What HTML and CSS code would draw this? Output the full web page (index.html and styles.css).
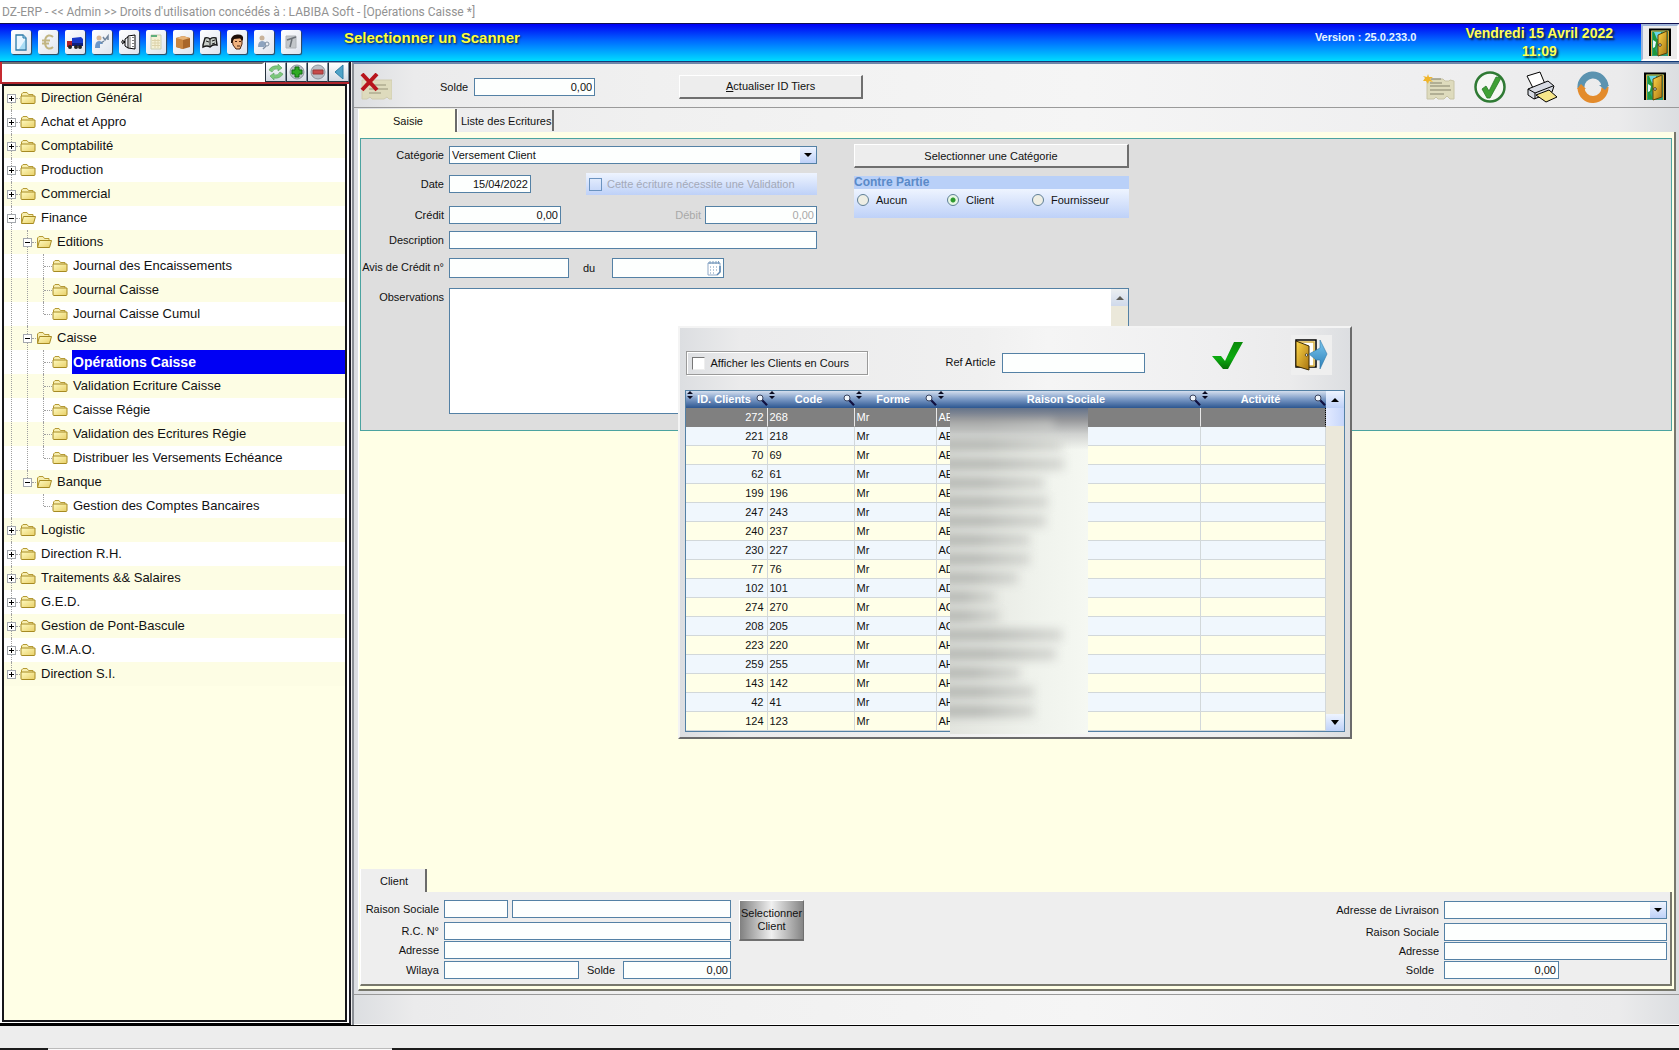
FILE: index.html
```html
<!DOCTYPE html>
<html lang="fr">
<head>
<meta charset="utf-8">
<title>DZ-ERP - Opérations Caisse</title>
<meta name="viewport" content="width=device-width, initial-scale=1">
<link rel="stylesheet" href="styles.css">
</head>
<body>
<svg class="sprite" aria-hidden="true">
  <defs>
    <linearGradient id="gold" x1="0" y1="0" x2="1" y2="1"><stop offset="0" stop-color="#fffbc0"/><stop offset="1" stop-color="#e8cf68"/></linearGradient>
    <linearGradient id="doorwood" x1="0" y1="0" x2="1" y2="1"><stop offset="0" stop-color="#ffd84a"/><stop offset="1" stop-color="#a87410"/></linearGradient>
    <linearGradient id="arrowblue" x1="0" y1="0" x2="0" y2="1"><stop offset="0" stop-color="#7cc8f0"/><stop offset="1" stop-color="#2c7fb8"/></linearGradient>
    <linearGradient id="leaf" x1="0" y1="0" x2="0" y2="1"><stop offset="0" stop-color="#0a8a0a"/><stop offset=".6" stop-color="#0cab10"/><stop offset="1" stop-color="#067006"/></linearGradient>
    <symbol id="folder" viewBox="0 0 16 14"><path d="M1.500 12V3L3 1.500h4l1.500 2h4.500v1.500" fill="#f7eeb0" stroke="#b59a35"/><path d="M3 5h12v6.500q0 1-1 1H2q-1 0-1-1V5z" fill="url(#gold)" stroke="#a68a22"/></symbol>
    <symbol id="folder-open" viewBox="0 0 16 14"><path d="M1.500 12V3L3 1.500h4l1.500 2h4.500v2" fill="#f7eeb0" stroke="#b59a35"/><path d="M3.500 5.500h12L13.500 12.500H1.500z" fill="url(#gold)" stroke="#a68a22"/></symbol>
    <symbol id="door" viewBox="0 0 22 29"><path d="M1 28V1.500h20V28" fill="#2f9e78" stroke="#000" stroke-width="2"/><path d="M2.500 28V3h17v25" fill="none" stroke="#d8b040"/><path d="M4 4h6v5l-2 3 1 5-3 4 3 6H4z" fill="#1f9a3c"/><path d="M5 4h7v7h-4z" fill="#66d8e8"/><path d="M4 12l3 2-1 5-2 1z" fill="#e9fbff"/><path d="M9 7l9-4v22l-9 3z" fill="url(#doorwood)" stroke="#5e4208"/><circle cx="11" cy="17" r="1.300" fill="#fff" stroke="#000" stroke-width=".7"/></symbol>
    <symbol id="lens" viewBox="0 0 12 12"><path d="M6 6l5 5.200" stroke="#101040" stroke-width="2.200"/><circle cx="4" cy="4" r="3" fill="#eef3fa" stroke="#39435e"/></symbol>
    <symbol id="sort" viewBox="0 0 6 8"><path d="M3 0l3 3H0zM0 5h6L3 8z" fill="#0a0a20"/></symbol>
  </defs>
</svg>

<div class="app">
  <div class="titlebar">DZ-ERP - &lt;&lt; Admin &gt;&gt; Droits d'utilisation concédés à : LABIBA Soft - [Opérations Caisse *]</div>

  <header class="banner">
    <nav class="quick" aria-label="Raccourcis">
      <button class="quick-btn" type="button" aria-label="Nouveau"><svg viewBox="0 0 16 20"><path d="M3 3h7l3 3v12H3z" fill="#eaf6ff" stroke="#2c7aa8" stroke-width="1.300"/><path d="M10 3v3h3" fill="#9fd0ea" stroke="#2c7aa8"/><path d="M12 8v9H6z" fill="#a9dcf5"/></svg></button>
      <button class="quick-btn" type="button" aria-label="Devises"><svg viewBox="0 0 16 20"><path d="M13 5Q11 3 8.500 3.500 5 4.500 5 10t3.500 6.500Q11 17 13 15M2 8.500h8M2 11.500h7" fill="none" stroke="#c2b583" stroke-width="2"/></svg></button>
      <button class="quick-btn" type="button" aria-label="Livraison"><svg viewBox="0 0 16 20"><path d="M0 9h5v6H0z" fill="#b0202a"/><path d="M5 6l9-1 2 2v7H5z" fill="#1838c8"/><path d="M5 11h11v3H5z" fill="#0d1f80"/><circle cx="3" cy="15" r="2" fill="#222"/><circle cx="9" cy="15" r="2" fill="#222"/><circle cx="13" cy="15" r="2" fill="#222"/></svg></button>
      <button class="quick-btn" type="button" aria-label="Contacts"><svg viewBox="0 0 16 20"><circle cx="5" cy="6" r="2.500" fill="#d7b898"/><path d="M1 16q0-7 4-7 3 0 4 3H6v4z" fill="#6d97c9"/><path d="M9 5l2 3 3-4v4M7 11l3-2" fill="none" stroke="#70849c" stroke-width="1.500"/></svg></button>
      <button class="quick-btn" type="button" aria-label="Classeur"><svg viewBox="0 0 16 20"><path d="M7 4l7-1v14l-7-1z" fill="#fff" stroke="#000"/><path d="M12 5v1M12 8v1M12 11v1M12 14v1M7 5L4 7v7l3 2M0 10h4M1 8l3 2-3 2" fill="none" stroke="#000"/><path d="M9 5v11" stroke="#777"/></svg></button>
      <button class="quick-btn" type="button" aria-label="Facture"><svg viewBox="0 0 16 20"><path d="M3 3h10v14H3z" fill="#f5f1d6" stroke="#c9cdb0"/><path d="M3 3h6v2H3z" fill="#5fae7c"/><path d="M4 8.500h8M4 11h8M4 13.500h8M7 7v9M10 7v9" stroke="#ddd3aa"/></svg></button>
      <button class="quick-btn" type="button" aria-label="Stock"><svg viewBox="0 0 16 20"><path d="M1 6l7-2 7 2v9l-7 2-7-2z" fill="#a9662a"/><path d="M1 6l7 2v9l-7-2z" fill="#c98540"/><path d="M1 6l7-2 7 2-7 2z" fill="#e8b478"/></svg></button>
      <button class="quick-btn" type="button" aria-label="Journal"><svg viewBox="0 0 16 20"><path d="M1 13L3 6q3-1 5 1 3-2 6-1l1 7q-4-1-7 2-3-2-7 0z" fill="#c6ccc6" stroke="#181818" stroke-width="1.400"/><path d="M8 7v8M4 9l3 1M10 9l3-1M10 12l3-1" stroke="#222"/></svg></button>
      <button class="quick-btn" type="button" aria-label="Employé"><svg viewBox="0 0 16 20"><path d="M3 6h10v6l-2 5H7l-3-4z" fill="#f0b27e" stroke="#4a2410"/><path d="M2 11Q1 3 8 2.500t6 5L13 9l-2-3-6 1-2 4z" fill="#1d0f08"/><path d="M6 9.500h2M10 9.500h2M8 14h3" stroke="#4a2410"/></svg></button>
      <button class="quick-btn" type="button" aria-label="Utilisateurs"><svg viewBox="0 0 16 20"><circle cx="6" cy="6" r="2.500" fill="#c9b39a"/><path d="M2 15q0-6 4-6 3 0 4 3l-2 3z" fill="#8da3bf"/><circle cx="11" cy="12" r="2" fill="none" stroke="#8090a4"/><path d="M10 14l-3 3" stroke="#8090a4" stroke-width="1.500"/></svg></button>
      <button class="quick-btn" type="button" aria-label="Calcul"><svg viewBox="0 0 16 20"><path d="M3 4h10v12H3z" fill="#c2c6ca" stroke="#b0b4b8"/><path d="M4 8l9-3M9 7l-2 8" stroke="#6c7278" stroke-width="1.500"/></svg></button>
    </nav>
    <div class="banner-title">Selectionner un Scanner</div>
    <div class="version">Version : 25.0.233.0</div>
    <div class="clock">Vendredi 15 Avril 2022<br>11:09</div>
    <button class="exit-btn" type="button" aria-label="Quitter"><svg><use href="#door"/></svg></button>
  </header>

  <div class="content">
    <aside class="sidebar">
      <div class="search">
        <input class="search-box" type="text" aria-label="Rechercher">
        <button class="search-btn" type="button" aria-label="Actualiser"><svg viewBox="0 0 16 16"><path d="M1 6q3-5 9-4v-2l4 4-4 3V5Q6 4 4 8zM15 10q-3 5-9 4v2l-4-4 4-3v2q4 1 6-3z" fill="#7cc87a" stroke="#5ba05e" stroke-width=".6"/></svg></button>
        <button class="search-btn" type="button" aria-label="Développer"><svg viewBox="0 0 16 16"><circle cx="8" cy="8" r="7" fill="#b9bec6" stroke="#8f969f"/><path d="M6 3h4v3h3v4h-3v3H6v-3H3V6h3z" fill="#2faa22" stroke="#0f6e10"/></svg></button>
        <button class="search-btn" type="button" aria-label="Réduire"><svg viewBox="0 0 16 16"><circle cx="8" cy="8" r="7" fill="#b9bec6" stroke="#8f969f"/><path d="M3 6h10v4H3z" fill="#c84a4a" stroke="#9c3838"/></svg></button>
        <button class="search-btn" type="button" aria-label="Masquer"><svg viewBox="0 0 16 16"><path d="M12 1v14L4 8z" fill="#4fa3c8" stroke="#2f7fa6"/></svg></button>
      </div>
      <nav class="tree-box" aria-label="Modules">
        <ul class="tree">
          <li><div class="node"><button class="toggle plus" type="button" aria-label="Développer"></button><svg class="fold"><use href="#folder"/></svg><a href="#">Direction Général</a></div></li>
          <li><div class="node"><button class="toggle plus" type="button" aria-label="Développer"></button><svg class="fold"><use href="#folder"/></svg><a href="#">Achat et Appro</a></div></li>
          <li><div class="node"><button class="toggle plus" type="button" aria-label="Développer"></button><svg class="fold"><use href="#folder"/></svg><a href="#">Comptabilité</a></div></li>
          <li><div class="node"><button class="toggle plus" type="button" aria-label="Développer"></button><svg class="fold"><use href="#folder"/></svg><a href="#">Production</a></div></li>
          <li><div class="node"><button class="toggle plus" type="button" aria-label="Développer"></button><svg class="fold"><use href="#folder"/></svg><a href="#">Commercial</a></div></li>
          <li><div class="node"><button class="toggle" type="button" aria-label="Réduire"></button><svg class="fold"><use href="#folder-open"/></svg><a href="#">Finance</a></div>
            <ul>
              <li><div class="node"><button class="toggle" type="button" aria-label="Réduire"></button><svg class="fold"><use href="#folder-open"/></svg><a href="#">Editions</a></div>
                <ul>
                  <li><div class="node leaf"><svg class="fold"><use href="#folder"/></svg><a href="#">Journal des Encaissements</a></div></li>
                  <li><div class="node leaf"><svg class="fold"><use href="#folder"/></svg><a href="#">Journal Caisse</a></div></li>
                  <li><div class="node leaf"><svg class="fold"><use href="#folder"/></svg><a href="#">Journal Caisse Cumul</a></div></li>
                </ul>
              </li>
              <li><div class="node"><button class="toggle" type="button" aria-label="Réduire"></button><svg class="fold"><use href="#folder-open"/></svg><a href="#">Caisse</a></div>
                <ul>
                  <li><div class="node leaf"><svg class="fold"><use href="#folder"/></svg><a class="current" href="#">Opérations Caisse</a></div></li>
                  <li><div class="node leaf"><svg class="fold"><use href="#folder"/></svg><a href="#">Validation Ecriture Caisse</a></div></li>
                  <li><div class="node leaf"><svg class="fold"><use href="#folder"/></svg><a href="#">Caisse Régie</a></div></li>
                  <li><div class="node leaf"><svg class="fold"><use href="#folder"/></svg><a href="#">Validation des Ecritures Régie</a></div></li>
                  <li><div class="node leaf"><svg class="fold"><use href="#folder"/></svg><a href="#">Distribuer les Versements Echéance</a></div></li>
                </ul>
              </li>
              <li><div class="node"><button class="toggle" type="button" aria-label="Réduire"></button><svg class="fold"><use href="#folder-open"/></svg><a href="#">Banque</a></div>
                <ul>
                  <li><div class="node leaf"><svg class="fold"><use href="#folder"/></svg><a href="#">Gestion des Comptes Bancaires</a></div></li>
                </ul>
              </li>
            </ul>
          </li>
          <li><div class="node"><button class="toggle plus" type="button" aria-label="Développer"></button><svg class="fold"><use href="#folder"/></svg><a href="#">Logistic</a></div></li>
          <li><div class="node"><button class="toggle plus" type="button" aria-label="Développer"></button><svg class="fold"><use href="#folder"/></svg><a href="#">Direction R.H.</a></div></li>
          <li><div class="node"><button class="toggle plus" type="button" aria-label="Développer"></button><svg class="fold"><use href="#folder"/></svg><a href="#">Traitements &amp;&amp; Salaires</a></div></li>
          <li><div class="node"><button class="toggle plus" type="button" aria-label="Développer"></button><svg class="fold"><use href="#folder"/></svg><a href="#">G.E.D.</a></div></li>
          <li><div class="node"><button class="toggle plus" type="button" aria-label="Développer"></button><svg class="fold"><use href="#folder"/></svg><a href="#">Gestion de Pont-Bascule</a></div></li>
          <li><div class="node"><button class="toggle plus" type="button" aria-label="Développer"></button><svg class="fold"><use href="#folder"/></svg><a href="#">G.M.A.O.</a></div></li>
          <li><div class="node"><button class="toggle plus" type="button" aria-label="Développer"></button><svg class="fold"><use href="#folder"/></svg><a href="#">Direction S.I.</a></div></li>
        </ul>
      </nav>
    </aside>

    <main class="main">
      <div class="toolbar">
        <button class="tool" type="button" aria-label="Supprimer"><svg width="32" height="27" viewBox="0 0 32 27"><path d="M2 7h30v19h-3l-2-2-3 2H12l-2-2-3 2H2z" fill="#dedbbd" stroke="#d0ccb0"/><path d="M9 12h17M9 16h19M9 20h12" stroke="#98957a"/><path d="M2 1l15 16M17 1L2 17" stroke="#b8141c" stroke-width="4"/></svg></button>
        <label class="tool-label" for="solde">Solde</label>
        <input class="field num w-solde" id="solde" type="text" value="0,00">
        <button class="push w-refresh" type="button"><span><u>A</u>ctualiser ID Tiers</span></button>
        <div class="tool-right">
          <button class="tool" type="button" aria-label="Nouveau"><svg width="32" height="26" viewBox="0 0 32 26"><path d="M4 5h16l2 2h4l1-1 4 1v18h-4l-3-3-3 3h-6l-2-2-2 2H4z" fill="#dedbbd" stroke="#c8c4a6"/><path d="M8 5h10M7 9h12M7 12h20M7 16h21M7 20h14" stroke="#85836c"/><path d="M5 0l1 3 4 0-3 2 3 3-4-1-1 3-2-3-3 0 2-3-2-2 4 1z" fill="#f0b52a"/></svg></button>
          <button class="tool" type="button" aria-label="Valider"><svg width="33" height="32" viewBox="0 0 33 32"><circle cx="16" cy="16" r="14.500" fill="#f6f8f4" stroke="#2f7a34" stroke-width="2.500"/><path d="M8 18l4-3 3 5L22 6l5 1L16 27h-3z" fill="#3fa035" stroke="#2a7a28" stroke-width=".8"/></svg></button>
          <button class="tool" type="button" aria-label="Imprimer"><svg width="32" height="32" viewBox="0 0 32 32"><path d="M1 5l13-4 5 12-12 4z" fill="#fff" stroke="#000"/><path d="M2 18l20-8 6 5-2 6-18 7-6-4z" fill="#d7dbe4" stroke="#000"/><path d="M2 18l7 4 18-7M9 22v6" fill="none" stroke="#000"/><path d="M10 24l13-5 8 7-11 5z" fill="#f6e58a" stroke="#000"/></svg></button>
          <button class="tool" type="button" aria-label="Actualiser"><svg width="32" height="32" viewBox="0 0 32 32"><path d="M4 17A12 12 0 0 1 28 15" fill="none" stroke="#5b93b0" stroke-width="7"/><path d="M28 16A12 12 0 0 1 4 17" fill="none" stroke="#e38b2c" stroke-width="7"/><path d="M22 14h10l-4 5z" fill="#5b93b0"/><path d="M0 18h9l-5-5z" fill="#e38b2c"/></svg></button>
          <button class="tool leave" type="button" aria-label="Fermer"><svg width="22" height="29"><use href="#door"/></svg></button>
        </div>
      </div>

      <div class="tabs" role="tablist">
        <button class="tab active" type="button" role="tab" aria-selected="true">Saisie</button>
        <button class="tab" type="button" role="tab" aria-selected="false">Liste des Ecritures</button>
      </div>

      <section class="page">
        <form class="entry">
          <label for="cat">Catégorie</label>
          <div class="line"><select class="field combo" id="cat"><option>Versement Client</option></select></div>
          <label for="date">Date</label>
          <div class="line spread short"><input class="field num w-date" id="date" type="text" value="15/04/2022"><label class="validation"><input class="tick" type="checkbox" disabled>Cette écriture nécessite une Validation</label></div>
          <label for="credit">Crédit</label>
          <div class="line spread"><input class="field num w-amount" id="credit" type="text" value="0,00"><span class="line dim"><label for="debit">Débit</label><input class="field num w-amount" id="debit" type="text" value="0,00" disabled></span></div>
          <label for="desc">Description</label>
          <div class="line"><input class="field grow" id="desc" type="text"></div>
          <label for="avis">Avis de Crédit n°</label>
          <div class="line"><input class="field tall w-avis" id="avis" type="text"><label class="du" for="du">du</label><span class="field tall w-amount calendar"><input class="bare" id="du" type="text"><svg width="14" height="15" viewBox="0 0 14 15"><path d="M1 2h12v9l-3 3H1z" fill="#fff" stroke="#8fa9c8"/><path d="M1 2h12M3 0v3M6 0v3M9 0v3M11.500 0v3" stroke="#7f9fc0"/><path d="M3 6h8M3 9h8M3 12h6" stroke="#7193b8" stroke-dasharray="1 2"/><path d="M13 5v6l-3 3" fill="none" stroke="#5f86b0" stroke-width="1.500"/></svg></span></div>
          <label for="obs">Observations</label>
          <div class="memo"><textarea id="obs"></textarea><span class="scroll"><button class="scroll-btn up dimmed" type="button" aria-label="Haut"></button></span></div>
          <div class="party">
            <button class="push" type="button">Selectionner une Catégorie</button>
            <fieldset>
              <legend>Contre Partie</legend>
              <div class="choices">
                <label><input class="dot" type="radio" name="p">Aucun</label>
                <label><input class="dot" type="radio" name="p" checked>Client</label>
                <label><input class="dot" type="radio" name="p">Fournisseur</label>
              </div>
            </fieldset>
          </div>
        </form>

        <div class="client-tabs"><button class="tab client-tab" type="button">Client</button></div>
        <form class="client">
          <div class="sheet">
            <label for="rs">Raison Sociale</label>
            <div class="line gap4"><input class="field w-code" id="rs" type="text"><input class="field grow" type="text" aria-label="Nom de la raison sociale"></div>
            <label for="rc">R.C. N°</label>
            <div class="line"><input class="field grow" id="rc" type="text"></div>
            <label for="adr">Adresse</label>
            <div class="line"><input class="field grow" id="adr" type="text"></div>
            <label for="wil">Wilaya</label>
            <div class="line spread"><input class="field w-wilaya" id="wil" type="text"><label for="s2">Solde</label><input class="field num w-balance" id="s2" type="text" value="0,00"></div>
          </div>
          <button class="pick" type="button">Selectionner Client</button>
          <div class="sheet delivery">
            <label for="al">Adresse de Livraison</label>
            <div class="line"><select class="field combo" id="al"><option></option></select></div>
            <label for="rs3">Raison Sociale</label>
            <div class="line"><input class="field grow" id="rs3" type="text"></div>
            <label for="adr3">Adresse</label>
            <div class="line"><input class="field grow" id="adr3" type="text"></div>
            <label class="far" for="s3">Solde</label>
            <div class="line"><input class="field num w-delivery" id="s3" type="text" value="0,00"></div>
          </div>
        </form>
      </section>
      <div class="status"></div>

      <div class="dialog" role="dialog" aria-label="Clients">
        <div class="dialog-bar">
          <label class="current-only"><input class="tick sunken" type="checkbox">Afficher les Clients en Cours</label>
          <label class="ref" for="ref">Ref Article</label>
          <input class="field tall w-ref" id="ref" type="text">
          <div class="dialog-tools">
            <button class="tool" type="button" aria-label="Valider"><svg width="32" height="29" viewBox="0 0 32 29"><path d="M1 15h9l4 5L23 1h9L17 28h-5z" fill="url(#leaf)"/></svg></button>
            <button class="tool out" type="button" aria-label="Sortir"><svg width="33" height="32" viewBox="0 0 33 32"><path d="M1 28V1h20v27z" fill="#fff" stroke="#000" stroke-width="1.500"/><path d="M3 27V3h16v24z" fill="none" stroke="#d8b040" stroke-width="1.500"/><path d="M1 2l13 5v24L1 27z" fill="url(#doorwood)" stroke="#3d2b04"/><circle cx="11.500" cy="16" r="1.200" fill="#fff" stroke="#000" stroke-width=".6"/><path d="M14 15l11-6V1l7 14-7 15v-9l-4 0z" fill="url(#arrowblue)" stroke="#2f79a8" stroke-width=".6"/></svg></button>
          </div>
        </div>
        <div class="grid">
          <table>
            <colgroup><col class="c-id"><col class="c-code"><col class="c-forme"><col><col class="c-act"></colgroup>
            <thead>
              <tr>
                <th><div class="head"><svg class="sort"><use href="#sort"/></svg><span>ID. Clients</span><svg class="lens"><use href="#lens"/></svg></div></th>
                <th><div class="head"><svg class="sort"><use href="#sort"/></svg><span>Code</span><svg class="lens"><use href="#lens"/></svg></div></th>
                <th><div class="head"><svg class="sort"><use href="#sort"/></svg><span>Forme</span><svg class="lens"><use href="#lens"/></svg></div></th>
                <th><div class="head"><svg class="sort"><use href="#sort"/></svg><span>Raison Sociale</span><svg class="lens"><use href="#lens"/></svg></div></th>
                <th><div class="head"><svg class="sort"><use href="#sort"/></svg><span>Activité</span><svg class="lens"><use href="#lens"/></svg></div></th>
              </tr>
            </thead>
            <tbody>
              <tr class="selected"><td>272</td><td>268</td><td>Mr</td><td>AE</td><td></td></tr>
              <tr><td>221</td><td>218</td><td>Mr</td><td>AE</td><td></td></tr>
              <tr><td>70</td><td>69</td><td>Mr</td><td>AE</td><td></td></tr>
              <tr><td>62</td><td>61</td><td>Mr</td><td>AE</td><td></td></tr>
              <tr><td>199</td><td>196</td><td>Mr</td><td>AE</td><td></td></tr>
              <tr><td>247</td><td>243</td><td>Mr</td><td>AE</td><td></td></tr>
              <tr><td>240</td><td>237</td><td>Mr</td><td>AE</td><td></td></tr>
              <tr><td>230</td><td>227</td><td>Mr</td><td>AC</td><td></td></tr>
              <tr><td>77</td><td>76</td><td>Mr</td><td>AD</td><td></td></tr>
              <tr><td>102</td><td>101</td><td>Mr</td><td>AD</td><td></td></tr>
              <tr><td>274</td><td>270</td><td>Mr</td><td>AC</td><td></td></tr>
              <tr><td>208</td><td>205</td><td>Mr</td><td>AC</td><td></td></tr>
              <tr><td>223</td><td>220</td><td>Mr</td><td>AH</td><td></td></tr>
              <tr><td>259</td><td>255</td><td>Mr</td><td>AH</td><td></td></tr>
              <tr><td>143</td><td>142</td><td>Mr</td><td>AH</td><td></td></tr>
              <tr><td>42</td><td>41</td><td>Mr</td><td>AH</td><td></td></tr>
              <tr><td>124</td><td>123</td><td>Mr</td><td>AH</td><td></td></tr>
            </tbody>
          </table>
          <div class="scroll grid-scroll"><button class="scroll-btn up" type="button" aria-label="Haut"></button><span class="thumb"></span><button class="scroll-btn down" type="button" aria-label="Bas"></button></div>
          <div class="mask" aria-hidden="true">
            <i style="width:112px"></i><i style="width:120px"></i><i style="width:122px"></i><i style="width:102px"></i><i style="width:106px"></i><i style="width:104px"></i><i style="width:88px"></i><i style="width:88px"></i><i style="width:76px"></i><i style="width:54px"></i><i style="width:58px"></i><i style="width:120px"></i><i style="width:114px"></i><i style="width:78px"></i><i style="width:92px"></i><i style="width:92px"></i>
          </div>
        </div>
      </div>
    </main>
  </div>

  <footer class="footer"></footer>
  <div class="taskbar"><span></span></div>
</div>
</body>
</html>
```

FILE: styles.css
```css
* { box-sizing: border-box; }

:root {
  --cream: #ffffe6;
  --line: #5481a5;
  --steel: linear-gradient(90deg, #dcdee1 0, #ebebec 60px, #f0f0f0 300px, #f5f5f5 55%, #efeff0 80%, #ebebec calc(100% - 60px), #dcdee1 100%);
  --sky: linear-gradient(#eef4ff, #bed1f8);
}

body {
  margin: 0;
  font: 11px/14px "Liberation Sans", Arial, sans-serif;
  color: #111;
  background: #ededed;
}

button, input, select, textarea { font: inherit; color: inherit; margin: 0; padding: 0; border: 0; border-radius: 0; }
svg { display: block; flex: none; }
.sprite { position: absolute; width: 0; height: 0; }

.app { display: flex; flex-direction: column; min-height: 100vh; }

.titlebar {
  height: 23px;
  padding-left: 2px;
  background: #fff;
  color: #929292;
  font: 12px/24px Roboto, "Open Sans", sans-serif;
  white-space: nowrap;
  overflow: hidden;
}

/* banner */
.banner {
  display: flex;
  height: 39px;
  padding-left: 11px;
  border-top: 1px solid #101050;
  border-bottom: 1px solid #123a78;
  background: linear-gradient(#0000f4, #0068ff 45%, #00dcff);
}
.quick { display: flex; gap: 7px; padding-top: 6px; }
.quick-btn {
  display: flex; align-items: center; justify-content: center;
  width: 20px; height: 24px;
  border-radius: 2px;
  background: linear-gradient(135deg, #fff, #dfe4ee);
  box-shadow: 1px 1px 1px #345;
}
.quick-btn svg { width: 16px; height: 20px; }
.banner-title, .version, .clock { font-weight: bold; white-space: nowrap; }
.banner-title { margin-left: 43px; font-size: 15px; line-height: 28px; color: #ffff3c; text-shadow: 1px 1px 2px #123; }
.version { margin-left: auto; font-size: 11px; line-height: 26px; color: #e8f4ff; }
.clock { margin: 0 28px 0 49px; font-size: 14px; line-height: 18px; text-align: center; color: #ffff50; text-shadow: 2px 2px 2px #123; }
.exit-btn {
  display: flex; align-items: center; justify-content: center;
  width: 38px; height: 37px;
  border: 2px solid; border-color: #9fb4d8 #fff #fff #9fb4d8;
  background: #ececec;
}
.exit-btn svg { width: 22px; height: 29px; }

.content { flex: 1; display: flex; border-bottom: 1px solid #000; }

/* sidebar */
.sidebar {
  display: flex; flex-direction: column;
  flex: none; width: 351px;
  border-right: 2px solid #1c1c24;
  border-bottom: 2px solid #000;
  background: #fff;
}
.search { display: flex; height: 22px; border-left: 2px solid #c62a30; border-bottom: 2px solid #b0262c; }
.search-box { flex: 1; min-width: 0; border-top: 2px solid #707070; border-right: 3px solid #fff; background: #fff; }
.search-btn {
  display: flex; align-items: center; justify-content: center;
  width: 21px; height: 20px;
  border: 1px solid #26323e; border-top-color: #9ab; border-right-color: #789;
  background: linear-gradient(#fff, #d4dbe4);
}
.search-btn svg { width: 16px; height: 16px; }

.tree-box {
  flex: 1;
  margin: 0 2px 1px;
  border: 2px solid #16161a;
  background: var(--cream);
}
.tree, .tree ul { list-style: none; margin: 0; padding: 0; }
.tree { background: repeating-linear-gradient(#fdfde4 0 24px, #fff 24px 48px); }
.tree ul { padding-left: 16px; }
.tree li { position: relative; }
/* dotted guide running down the toggles of one level */
.tree li::before {
  content: "";
  position: absolute; left: 7px; top: 0; bottom: 0;
  border-left: 1px dotted #a0a0a0;
}
.tree > li:first-child::before { top: 12px; }
.tree li:last-child::before { bottom: auto; height: 12px; }
.node { display: flex; align-items: center; height: 24px; padding-left: 3px; }
.node::before { content: ""; order: 1; width: 4px; border-top: 1px dotted #a0a0a0; }
.leaf::before { width: 8px; margin-left: 5px; }
.toggle {
  position: relative;
  width: 9px; height: 9px;
  border: 1px solid #a4a8ae;
  background: linear-gradient(#000, #000) center / 5px 1px no-repeat #fff;
}
.plus { background: linear-gradient(#000, #000) center / 5px 1px no-repeat, linear-gradient(#000, #000) center / 1px 5px no-repeat, #fff; }
.fold { order: 2; width: 16px; height: 14px; }
.node a {
  order: 3; flex: 1;
  margin-left: 4px; padding-left: 1px;
  font-size: 13px; line-height: 24px;
  color: #111; text-decoration: none; white-space: nowrap;
}
.node a.current { background: #0000f4; color: #fff; font-size: 14px; font-weight: bold; }

/* main area */
.main {
  position: relative;
  display: flex; flex-direction: column;
  flex: 1; min-width: 0;
  margin-left: 1px;
  border-left: 2px solid #8a8e94;
  border-top: 2px solid #6c86aa;
  background: var(--steel);
}
.toolbar { display: flex; align-items: center; height: 44px; padding: 2px 13px 0 6px; border-bottom: 1px solid #9a9a9a; }
.tool { background: none; flex: none; }
.tool-label { margin-left: 48px; }
.tool-label + .field { margin-left: 6px; }
.tool-right { display: flex; align-items: center; gap: 19px; margin-left: auto; }
.leave { margin-left: 16px; }

.field { height: 18px; padding: 0 2px; border: 1px solid var(--line); background: #fdfffe; min-width: 0; flex: none; }
.field:disabled { color: #a8a8a8; }
.tall { height: 20px; }
.num { text-align: right; }
.grow { flex: 1; }
.combo {
  flex: 1; appearance: none; padding-left: 2px; padding-right: 18px;
  background: url("data:image/svg+xml,%3Csvg xmlns='http://www.w3.org/2000/svg' width='8' height='4'%3E%3Cpath d='M0 0h8L4 4z'/%3E%3C/svg%3E") right 4px center no-repeat,
    var(--sky) right / 16px 100% no-repeat, #fdfffe;
}
.w-solde { width: 121px; }
.w-refresh { width: 184px; margin-left: 84px; }
.w-date { width: 82px; }
.w-amount { width: 112px; }
.w-avis { width: 120px; }
.w-code { width: 64px; }
.w-wilaya { width: 135px; }
.w-balance { width: 108px; }
.w-delivery { width: 115px; }
.w-ref { width: 143px; }

.push {
  height: 24px;
  border: 2px solid; border-color: #fff #6f6f6f #6f6f6f #fff; border-top-width: 1px; border-left-width: 1px;
  background: #ededed;
}

.tabs { display: flex; height: 24px; padding: 1px 0 0 4px; }
.tab { height: 23px; padding: 1px 1px 0 3px; background: #eee; border-left: 1px solid #fff; border-right: 2px solid #6b6b6b; }
.tabs .tab { height: 21px; margin-top: 1px; }
.tabs .active { width: 99px; height: 23px; margin-top: 0; background: var(--cream); }

.page {
  flex: 1;
  display: flex; flex-direction: column;
  margin: 0 3px 3px 4px;
  padding: 6px 2px 3px 1px;
  border-left: 1px solid #fff; border-right: 2px solid #77776c; border-bottom: 2px solid #77776c;
  background: var(--cream);
}

/* entry form */
.entry {
  display: grid;
  grid-template-columns: 88px 368px 312px;
  grid-template-rows: 29px 31px 25px 27px 30px 126px;
  align-items: start;
  padding: 7px 0 16px;
  border: 1px solid #4ba3a0;
  background: #dedede;
}
.entry > label { grid-column: 1; padding: 2px 5px 0 0; text-align: right; white-space: nowrap; }
.line { display: flex; align-items: center; min-width: 0; }
.entry .line { grid-column: 2; }
.spread { justify-content: space-between; }
.short { height: 18px; }
.dim { gap: 4px; color: #a8a8a8; }
.gap4 { gap: 4px; }
.validation {
  display: flex; align-items: center; gap: 5px;
  width: 231px; height: 22px; padding-left: 3px;
  background: var(--sky); color: #a3a9b8;
}
.tick { appearance: none; width: 13px; height: 13px; border: 1px solid #6b93c0; background: none; }
.sunken { border: 1px solid #777; border-right-color: #eee; border-bottom-color: #eee; background: #fff; }
.du { margin: 0 17px 0 14px; }
.calendar { display: flex; align-items: center; }
.bare { flex: 1; min-width: 0; background: none; outline: 0; }

.memo { grid-column: 2 / 4; display: flex; height: 126px; border: 1px solid var(--line); background: #fff; }
.memo textarea { flex: 1; resize: none; background: none; outline: 0; }
.scroll { display: flex; flex-direction: column; width: 17px; background: #ebe8da; }
.scroll-btn {
  height: 17px;
  background: url("data:image/svg+xml,%3Csvg xmlns='http://www.w3.org/2000/svg' width='8' height='4'%3E%3Cpath d='M0 4h8L4 0z'/%3E%3C/svg%3E") center no-repeat, var(--sky);
}
.down { margin-top: auto; background: url("data:image/svg+xml,%3Csvg xmlns='http://www.w3.org/2000/svg' width='8' height='5'%3E%3Cpath d='M0 0h8L4 5z'/%3E%3C/svg%3E") center no-repeat, var(--sky); }
.dimmed { opacity: .6; }

.party { grid-column: 3; grid-row: 1 / 5; display: flex; flex-direction: column; gap: 8px; margin-top: -2px; padding-left: 37px; }
fieldset { margin: 0; padding: 0; border: 0; min-width: 0; }
legend { width: 100%; padding: 0; line-height: 13px; font-size: 12px; font-weight: bold; color: #5a8ac8; background: #b9d0f8; }
.choices { display: flex; height: 29px; padding: 4px 0 0 3px; background: var(--sky); }
.choices label { display: flex; align-items: center; gap: 7px; width: 90px; height: 13px; }
.choices label + label + label { margin-left: -5px; }
.dot { appearance: none; width: 12px; height: 12px; border: 1px solid #5f7f96; border-radius: 50%; background: #eeeee4; }
.dot:checked { background: radial-gradient(circle, #2e9a2e 0 2px, #e6f7e4 3px); }

/* client block */
.client-tabs { display: flex; margin-top: auto; }
.client-tab { width: 67px; }
.client {
  display: flex; align-items: flex-start;
  height: 94px;
  padding: 8px 3px 0 0;
  border-left: 1px solid #fff; border-right: 2px solid #77776c; border-bottom: 2px solid #77776c;
  background: #eeeeee;
}
.sheet {
  display: grid;
  grid-template-columns: 83px 287px;
  grid-template-rows: 22px 19px 20px 20px;
  align-items: start;
}
.sheet > label { padding: 2px 5px 0 0; text-align: right; white-space: nowrap; }
.delivery { grid-template-columns: auto 223px; margin: 1px 0 0 auto; grid-template-rows: 22px 19px 19px 20px; }
.sheet > .far { padding-right: 10px; }
.pick {
  width: 65px; height: 41px; margin-left: 8px;
  border: 1px solid; border-color: #fff #6f6f6f #6f6f6f #fff;
  border-bottom-width: 2px;
  background: linear-gradient(90deg, #808080, #f0f0f0 50%, #858585);
  line-height: 13px;
}

.status { height: 31px; border-top: 1px solid #9a9a9a; border-bottom: 1px solid #fff; background: var(--steel); }
.footer { height: 22px; background: #ededed; }
.taskbar { height: 2px; padding-left: 48px; background: #1c1c1c; }
.taskbar span { display: block; width: 344px; height: 2px; background: #fafafa; border-top: 1px solid #bbb; }

/* client lookup, floating over the entry form */
.dialog {
  position: absolute;
  top: 262px; left: 0; right: 4px;
  width: 674px;
  margin: 0 auto;
  padding: 0 5px 5px;
  border: 2px solid; border-color: #f4f4f4 #6b6b6b #6b6b6b #f4f4f4;
  background: var(--steel);
}
.dialog-bar { display: flex; align-items: center; height: 62px; padding: 0 13px 0 1px; }
.current-only {
  display: flex; align-items: center; gap: 6px;
  width: 182px; height: 24px; margin-top: 8px; padding-left: 5px;
  border: 1px solid #9a9a9a; box-shadow: inset 1px 1px #fff, 1px 1px #fff;
}
.ref { margin: 6px 6px 0 78px; }
.w-ref { margin-top: 8px; }
.dialog-tools { display: flex; align-items: center; gap: 48px; margin: 0 0 8px auto; }
.out { padding: 4px; background: #efefef; }

.grid { position: relative; display: flex; border: 1px solid var(--line); background: #fff; }
table { flex: 1; table-layout: fixed; border-spacing: 0; width: 0; }
.c-id { width: 82px; }
.c-code { width: 87px; }
.c-forme { width: 82px; }
.c-act { width: 125px; }
th { height: 17px; padding: 0; color: #fff; background: linear-gradient(#d4deee, #7f9dc8 45%, #2c5690); }
.head { display: flex; align-items: center; height: 17px; }
.head span { flex: 1; line-height: 19px; white-space: nowrap; }
.sort { width: 6px; height: 8px; margin-left: 1px; align-self: flex-start; }
.lens { width: 12px; height: 12px; }
td { height: 19px; padding: 0 2px; line-height: 18px; border-right: 1px solid #d2d8da; border-bottom: 1px solid #d2d8da; overflow: hidden; }
td:first-child { padding-right: 3px; text-align: right; }
tbody tr { background: #ffffe8; }
tbody tr:nth-child(even) { background: #f0f7fd; }
tbody tr.selected { background: #808080; color: #fff; }
.selected td { border-right-color: #e8e8e8; border-bottom-color: #808080; }
.selected td:last-child { border-right: 1px dotted #000; }
.grid-scroll { flex: none; width: 18px; }
.thumb { height: 18px; background: linear-gradient(90deg, #e2eaff, #c6d6fb); }

/* censored names */
.mask {
  position: absolute; left: 264px; top: 17px; bottom: -3px;
  width: 138px;
  padding-top: 12px;
  overflow: hidden;
  background: linear-gradient(#65738a 0, #96979a 12px, #d0d2d0 26px, transparent 42px), linear-gradient(90deg, #e2e4de, #eff2ec 60%, #f5f8f2);
}
.mask i { display: block; height: 12px; margin: 0 0 7px -8px; background: linear-gradient(90deg, #b6b8b4 40%, #d6d8d3); filter: blur(5px); }
.mask i:first-child { opacity: .5; }
```
